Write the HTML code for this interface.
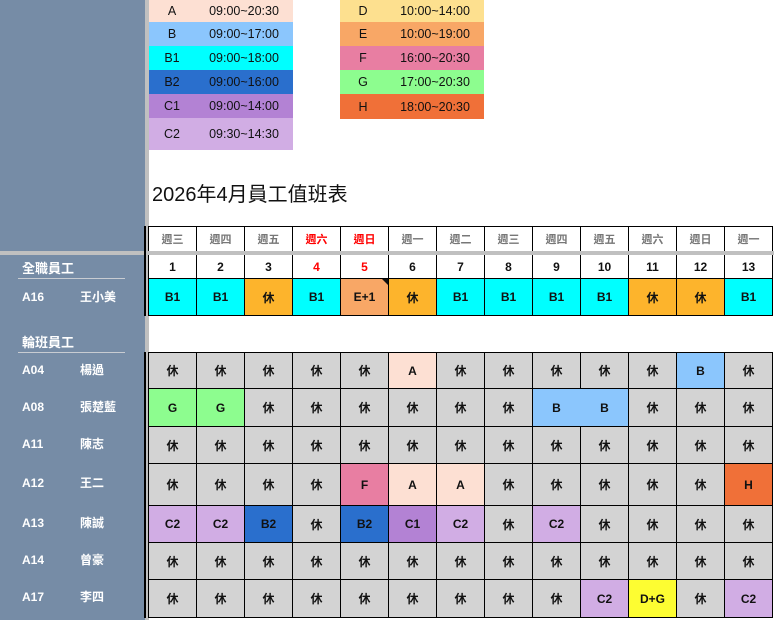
<!DOCTYPE html>
<html><head><meta charset="utf-8"><style>
*{margin:0;padding:0;box-sizing:border-box}
body{width:774px;height:620px;position:relative;overflow:hidden;background:#fff;font-family:"Liberation Sans","Noto Sans CJK TC",sans-serif}
.abs{position:absolute}
#lp{left:0;top:0;width:145px;height:620px;background:#768ca6}
#sep{left:145px;top:0;width:4px;height:620px;background:#c0c0c0}
#hsep{left:0;top:251px;width:774px;height:4px;background:#c0c0c0}
.lg{position:absolute;display:flex;align-items:center;font-size:12.5px;color:#111}
.lg span:first-child{width:46px;text-align:center}
.lg span:last-child{width:98px;text-align:center}
.row{position:absolute;left:148px;display:flex;border-left:1px solid #000;border-top:1px solid #000}
.row div{width:48px;height:100%;border-right:1px solid #000;display:flex;align-items:center;justify-content:center;font-size:12px;font-weight:bold;color:#111;background:#d3d3d3}
.wk div{background:#fff;color:#777;font-size:11px;font-weight:bold}
.dt div{background:#fff}
.r{color:#f00!important}
.o{background:#fdb42c!important}.c{background:#0ff!important}.e{background:#f8a766!important}
.a{background:#fde0d3!important}.b{background:#8bc6fd!important}.b2{background:#2a6fcd!important}
.c1{background:#b382d4!important}.c2{background:#d1ade4!important}.f{background:#e87ea2!important}
.g{background:#8dfd8f!important}.h{background:#f07038!important}.y{background:#fdfd32!important}
.lr{position:absolute;left:22px;width:120px;display:flex;align-items:center;color:#fff;font-weight:bold;font-size:12px;line-height:14px}
.lr span:first-child{width:58px}
.hd{position:absolute;color:#fff;font-weight:bold;font-size:13px}
.ul{position:absolute;left:18px;width:107px;height:1px;background:#c8ccd2}
</style></head><body>
<div id="lp" class="abs"></div>
<div id="sep" class="abs"></div>
<div id="hsep" class="abs"></div>
<div class="abs" style="left:144px;top:226px;width:2px;height:90px;background:#000"></div>
<div class="abs" style="left:144px;top:352px;width:2px;height:266px;background:#000"></div>

<div class="lg" style="left:149px;top:0;height:22px;background:#fde0d3"><span>A</span><span>09:00~20:30</span></div>
<div class="lg" style="left:149px;top:22px;height:24px;background:#8bc6fd"><span>B</span><span>09:00~17:00</span></div>
<div class="lg" style="left:149px;top:46px;height:24px;background:#0ff"><span>B1</span><span>09:00~18:00</span></div>
<div class="lg" style="left:149px;top:70px;height:24px;background:#2a6fcd"><span>B2</span><span>09:00~16:00</span></div>
<div class="lg" style="left:149px;top:94px;height:24px;background:#b382d4"><span>C1</span><span>09:00~14:00</span></div>
<div class="lg" style="left:149px;top:118px;height:32px;background:#d1ade4"><span>C2</span><span>09:30~14:30</span></div>
<div class="lg" style="left:340px;top:0;height:22px;background:#fde08f"><span>D</span><span>10:00~14:00</span></div>
<div class="lg" style="left:340px;top:22px;height:24px;background:#f8a766"><span>E</span><span>10:00~19:00</span></div>
<div class="lg" style="left:340px;top:46px;height:24px;background:#e87ea2"><span>F</span><span>16:00~20:30</span></div>
<div class="lg" style="left:340px;top:70px;height:24px;background:#8dfd8f"><span>G</span><span>17:00~20:30</span></div>
<div class="lg" style="left:340px;top:94px;height:25px;background:#f07038"><span>H</span><span>18:00~20:30</span></div>

<div class="abs" style="left:152px;top:178px;font-size:20px;color:#111">2026年4月員工值班表</div>

<div class="row wk" style="top:226px;height:25px"><div>週三</div><div>週四</div><div>週五</div><div class="r">週六</div><div class="r">週日</div><div>週一</div><div>週二</div><div>週三</div><div>週四</div><div>週五</div><div>週六</div><div>週日</div><div>週一</div></div>
<div class="row dt" style="top:255px;height:24px;border-top:none"><div>1</div><div>2</div><div>3</div><div class="r">4</div><div class="r">5</div><div>6</div><div>7</div><div>8</div><div>9</div><div>10</div><div>11</div><div>12</div><div>13</div></div>
<div class="row" style="top:278px;height:38px;border-bottom:1px solid #000"><div class="c">B1</div><div class="c">B1</div><div class="o">休</div><div class="c">B1</div><div class="e" style="position:relative">E+1<span style="position:absolute;right:0;top:0;width:0;height:0;border-top:6px solid #111;border-left:6px solid transparent"></span></div><div class="o">休</div><div class="c">B1</div><div class="c">B1</div><div class="c">B1</div><div class="c">B1</div><div class="o">休</div><div class="o">休</div><div class="c">B1</div></div>

<div class="row" style="top:352px;height:36px"><div>休</div><div>休</div><div>休</div><div>休</div><div>休</div><div class="a">A</div><div>休</div><div>休</div><div>休</div><div>休</div><div>休</div><div class="b">B</div><div>休</div></div>
<div class="row" style="top:388px;height:38px"><div class="g">G</div><div class="g">G</div><div>休</div><div>休</div><div>休</div><div>休</div><div>休</div><div>休</div><div class="b" style="border-right-color:#8bc6fd">B</div><div class="b">B</div><div>休</div><div>休</div><div>休</div></div>
<div class="row" style="top:426px;height:37px"><div>休</div><div>休</div><div>休</div><div>休</div><div>休</div><div>休</div><div>休</div><div>休</div><div>休</div><div>休</div><div>休</div><div>休</div><div>休</div></div>
<div class="row" style="top:463px;height:42px"><div>休</div><div>休</div><div>休</div><div>休</div><div class="f">F</div><div class="a">A</div><div class="a">A</div><div>休</div><div>休</div><div>休</div><div>休</div><div>休</div><div class="h">H</div></div>
<div class="row" style="top:505px;height:37px"><div class="c2">C2</div><div class="c2">C2</div><div class="b2">B2</div><div>休</div><div class="b2">B2</div><div class="c1">C1</div><div class="c2">C2</div><div>休</div><div class="c2">C2</div><div>休</div><div>休</div><div>休</div><div>休</div></div>
<div class="row" style="top:542px;height:37px"><div>休</div><div>休</div><div>休</div><div>休</div><div>休</div><div>休</div><div>休</div><div>休</div><div>休</div><div>休</div><div>休</div><div>休</div><div>休</div></div>
<div class="row" style="top:579px;height:39px;border-bottom:1px solid #000"><div>休</div><div>休</div><div>休</div><div>休</div><div>休</div><div>休</div><div>休</div><div>休</div><div>休</div><div class="c2">C2</div><div class="y">D+G</div><div>休</div><div class="c2">C2</div></div>

<div class="hd" style="left:22px;top:258px">全職員工</div>
<div class="ul" style="top:278px"></div>
<div class="lr" style="top:289px;height:16px"><span>A16</span><span>王小美</span></div>
<div class="hd" style="left:22px;top:332px">輪班員工</div>
<div class="ul" style="top:352px"></div>
<div class="lr" style="top:362px;height:16px"><span>A04</span><span>楊過</span></div>
<div class="lr" style="top:399px;height:16px"><span>A08</span><span>張楚藍</span></div>
<div class="lr" style="top:436px;height:16px"><span>A11</span><span>陳志</span></div>
<div class="lr" style="top:475px;height:16px"><span>A12</span><span>王二</span></div>
<div class="lr" style="top:515px;height:16px"><span>A13</span><span>陳誠</span></div>
<div class="lr" style="top:552px;height:16px"><span>A14</span><span>曾豪</span></div>
<div class="lr" style="top:589px;height:16px"><span>A17</span><span>李四</span></div>
</body></html>
